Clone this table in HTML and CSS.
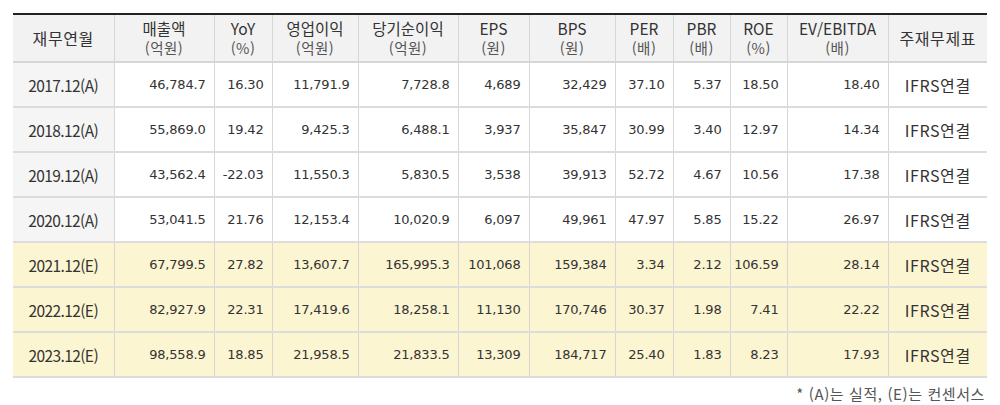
FILE: index.html
```html
<!DOCTYPE html>
<html lang="ko">
<head>
<meta charset="utf-8">
<link rel="stylesheet" href="styles.css">
</head>
<body>
<div class="wrap">
<table class="fin">
<colgroup>
<col style="width:101px"><col style="width:100px"><col style="width:58px"><col style="width:86px"><col style="width:100px"><col style="width:71px"><col style="width:86px"><col style="width:58px"><col style="width:57px"><col style="width:57px"><col style="width:101px"><col style="width:99px">
</colgroup>
<thead>
<tr>
<th class="k">재무연월</th>
<th>매출액<br><span class="u">(억원)</span></th>
<th>YoY<br><span class="u">(%)</span></th>
<th>영업이익<br><span class="u">(억원)</span></th>
<th>당기순이익<br><span class="u">(억원)</span></th>
<th>EPS<br><span class="u">(원)</span></th>
<th>BPS<br><span class="u">(원)</span></th>
<th>PER<br><span class="u">(배)</span></th>
<th>PBR<br><span class="u">(배)</span></th>
<th>ROE<br><span class="u">(%)</span></th>
<th>EV/EBITDA<br><span class="u">(배)</span></th>
<th class="k">주재무제표</th>
</tr>
</thead>
<tbody>
<tr><td class="d">2017.12(A)</td><td>46,784.7</td><td>16.30</td><td>11,791.9</td><td>7,728.8</td><td>4,689</td><td>32,429</td><td>37.10</td><td>5.37</td><td>18.50</td><td>18.40</td><td class="c">IFRS연결</td></tr>
<tr><td class="d">2018.12(A)</td><td>55,869.0</td><td>19.42</td><td>9,425.3</td><td>6,488.1</td><td>3,937</td><td>35,847</td><td>30.99</td><td>3.40</td><td>12.97</td><td>14.34</td><td class="c">IFRS연결</td></tr>
<tr><td class="d">2019.12(A)</td><td>43,562.4</td><td>-22.03</td><td>11,550.3</td><td>5,830.5</td><td>3,538</td><td>39,913</td><td>52.72</td><td>4.67</td><td>10.56</td><td>17.38</td><td class="c">IFRS연결</td></tr>
<tr><td class="d">2020.12(A)</td><td>53,041.5</td><td>21.76</td><td>12,153.4</td><td>10,020.9</td><td>6,097</td><td>49,961</td><td>47.97</td><td>5.85</td><td>15.22</td><td>26.97</td><td class="c">IFRS연결</td></tr>
<tr class="e"><td class="d">2021.12(E)</td><td>67,799.5</td><td>27.82</td><td>13,607.7</td><td>165,995.3</td><td>101,068</td><td>159,384</td><td>3.34</td><td>2.12</td><td>106.59</td><td>28.14</td><td class="c">IFRS연결</td></tr>
<tr class="e"><td class="d">2022.12(E)</td><td>82,927.9</td><td>22.31</td><td>17,419.6</td><td>18,258.1</td><td>11,130</td><td>170,746</td><td>30.37</td><td>1.98</td><td>7.41</td><td>22.22</td><td class="c">IFRS연결</td></tr>
<tr class="e"><td class="d">2023.12(E)</td><td>98,558.9</td><td>18.85</td><td>21,958.5</td><td>21,833.5</td><td>13,309</td><td>184,717</td><td>25.40</td><td>1.83</td><td>8.23</td><td>17.93</td><td class="c">IFRS연결</td></tr>
</tbody>
</table>
<p class="note">* (A)는 실적, (E)는 컨센서스</p>
</div>
</body>
</html>
```
FILE: styles.css
```css
html, body {
  margin: 0;
  padding: 0;
  background: #fff;
}
.wrap {
  padding: 13px 0 0 13px;
  width: 974px;
}
.fin {
  width: 974px;
  table-layout: fixed;
  border-collapse: collapse;
  border-top: 2px solid #222;
  border-bottom: 2px solid #c8c8c8;
  color: #333;
}
.fin th {
  background: #f2f2f2;
  font-family: "Noto Sans CJK KR", "Liberation Sans", sans-serif;
  font-weight: normal;
  font-size: 15.5px;
  line-height: 19px;
  height: 46px;
  padding: 0;
  text-align: center;
  border-left: 1px solid #d6d6d6;
  border-right: 1px solid #d6d6d6;
  border-bottom: 2px solid #d6d6d6;
  color: #333;
}
.fin th.k {
  font-size: 16px;
  letter-spacing: 0.6px;
}
.fin th:first-child { border-left: none; }
.fin th:last-child { border-right: none; }
.fin .u {
  font-size: 14.5px;
  letter-spacing: 0.5px;
  color: #555;
}
.fin td {
  font-family: "DejaVu Sans", sans-serif;
  font-size: 13px;
  letter-spacing: -0.2px;
  height: 43px;
  padding: 0 8px 0 0;
  text-align: right;
  background: #fff;
  border-left: 1px solid #d6d6d6;
  border-right: 1px solid #d6d6d6;
  border-bottom: 2px solid #dcdcdc;
  color: #333;
}
.fin td:first-child { border-left: none; }
.fin td:last-child { border-right: none; }
.fin td.d {
  background: #f5f5f5;
  text-align: center;
  padding: 0;
  font-family: "Noto Sans CJK KR", "Liberation Sans", sans-serif;
  font-size: 15.5px;
  letter-spacing: -0.6px;
}
.fin td.c {
  text-align: center;
  padding: 0;
  font-family: "Noto Sans CJK KR", "Liberation Sans", sans-serif;
  font-size: 16px;
  letter-spacing: 0.6px;
}
.fin tr.e td {
  background: #fcf5d2;
}
.note {
  margin: 5px 2px 0 0;
  text-align: right;
  font-family: "Noto Sans CJK KR", "Liberation Sans", sans-serif;
  font-size: 15px;
  letter-spacing: 0.6px;
  color: #555;
}
```
